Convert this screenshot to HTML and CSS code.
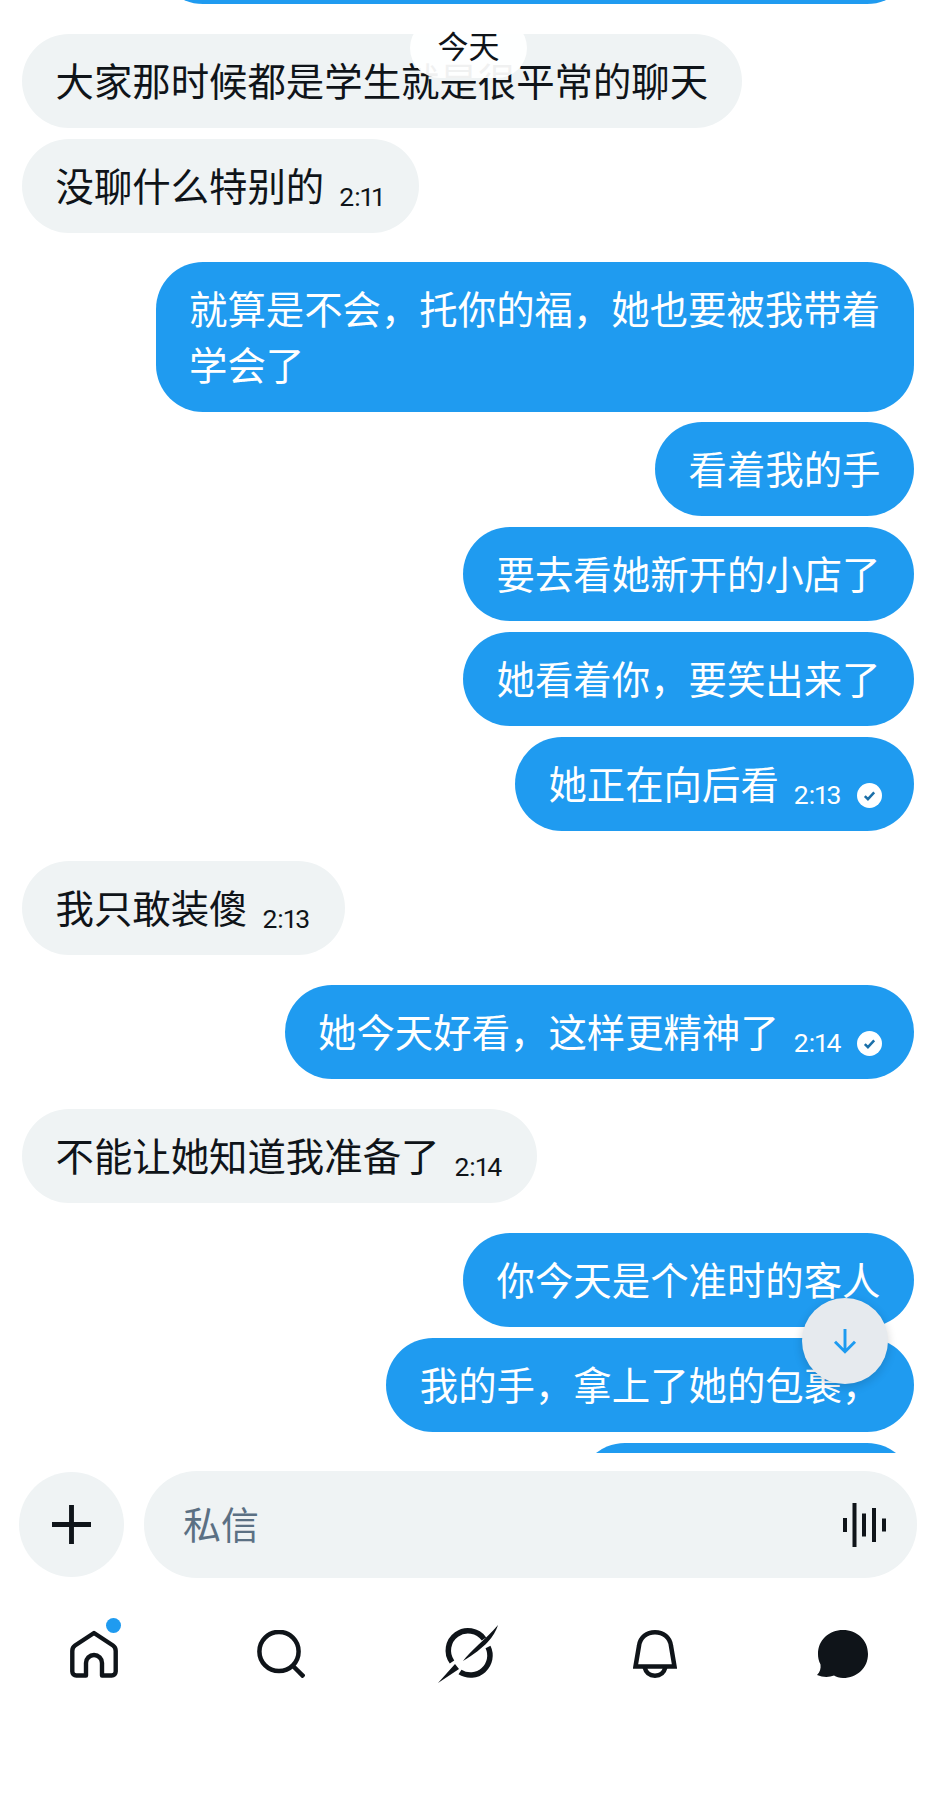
FILE: index.html
```html
<!DOCTYPE html>
<html lang="zh">
<head>
<meta charset="utf-8">
<title>私信</title>
<link rel="stylesheet" href="styles.css">
</head>
<body>
<div class="app">
  <main class="chat">
    <div class="bubble out clipped-top">我们今天已经把这些事情全部都安排好了</div>
    <div class="bubble in group">大家那时候都是学生就是很平常的聊天</div>
    <div class="bubble in stamped">没聊什么特别的<span class="time">2:11</span></div>
    <div class="bubble out group tight">就算是不会，托你的福，她也要被我带着学会了</div>
    <div class="bubble out after-tall">看着我的手</div>
    <div class="bubble out">要去看她新开的小店了</div>
    <div class="bubble out">她看着你，要笑出来了</div>
    <div class="bubble out sent">她正在向后看<span class="time">2:13</span><svg class="check" viewBox="0 0 24 24"><circle cx="12" cy="12" r="12" fill="#fff"/><path d="M7.5 12.5l3 3 6-6.5" fill="none" stroke="#1b6fa8" stroke-width="2.4"/></svg></div>
    <div class="bubble in group stamped">我只敢装傻<span class="time">2:13</span></div>
    <div class="bubble out group sent">她今天好看，这样更精神了<span class="time">2:14</span><svg class="check" viewBox="0 0 24 24"><circle cx="12" cy="12" r="12" fill="#fff"/><path d="M7.5 12.5l3 3 6-6.5" fill="none" stroke="#1b6fa8" stroke-width="2.4"/></svg></div>
    <div class="bubble in group stamped">不能让她知道我准备了<span class="time">2:14</span></div>
    <div class="bubble out group">你今天是个准时的客人</div>
    <div class="bubble out">我的手，拿上了她的包裹，</div>
    <div class="bubble out">我们一起出发吧</div>
    <div class="date-pill">今天</div>
    <button class="scroll-down" aria-label="向下滚动">
      <svg viewBox="0 0 24 24" class="scroll-icon"><path d="M12 3v17M4.5 12.5L12 20l7.5-7.5" fill="none" stroke="#1d9bf0" stroke-width="2.2"/></svg>
    </button>
  </main>

  <section class="composer">
    <button class="plus" aria-label="添加">
      <svg viewBox="0 0 40 40" class="plus-icon"><path d="M20 0v40M0 20h40" stroke="#0f1419" stroke-width="5"/></svg>
    </button>
    <div class="input">
      <span class="placeholder">私信</span>
      <svg viewBox="0 0 44 44" class="voice"><path d="M2 15v14M11.500 0v44M21 10.500v23M31 5v34M41 15.500v13" stroke="#0f1419" stroke-width="4" fill="none"/></svg>
    </div>
  </section>

  <nav class="tabs">
    <div class="tab home">
      <svg viewBox="0 0 48 48" class="ico-home"><path d="M24 3L43 15.500Q45.700 17.300 45.700 21V41.500a4 4 0 0 1-4 4H32V33a8 8 0 0 0-16 0V45.500H6.300a4 4 0 0 1-4-4V21Q2.300 17.300 5 15.500Z" fill="none" stroke="#0f1419" stroke-width="4.400" stroke-linejoin="round"/></svg>
      <span class="dot"></span>
    </div>
    <div class="tab">
      <svg viewBox="0 0 48 48" class="ico-search"><circle cx="22" cy="21.500" r="19.600" fill="none" stroke="#0f1419" stroke-width="4.500"/><path d="M35 35L47 47" stroke="#0f1419" stroke-width="4.500"/></svg>
    </div>
    <div class="tab">
      <svg viewBox="0 0 60 58" class="ico-grok"><path d="M46 14A19.500 19.500 0 0 0 14 37M22 47A19.500 19.500 0 0 0 50 22" fill="none" stroke="#0f1419" stroke-width="5.500"/><path d="M60 0C56 12 48 22 25 36C32 26 48 14 60 0ZM0 58L17 39L21 44Z" fill="#0f1419"/></svg>
    </div>
    <div class="tab">
      <svg viewBox="0 0 44 48" class="ico-bell"><path d="M2.500 36.500L6 16C7 7 14 2.250 22 2.250C30 2.250 37 7 38 16L41.500 36.500Z" fill="none" stroke="#0f1419" stroke-width="4.500"/><path d="M11.500 37C13 43 17 45.700 22 45.700C27 45.700 31 43 32.500 37" fill="none" stroke="#0f1419" stroke-width="4.500"/></svg>
    </div>
    <div class="tab">
      <svg viewBox="0 0 51 48" class="ico-msg"><path d="M26 0C40 0 51 10 51 24S40 48 26 48C22 48 19.500 47 17 45.500C12 47.500 6 47.500 0 45C3 42 4 38.500 3.500 34.500C1.500 31 1 27 1 24C1 10 12 0 26 0Z" fill="#0f1419"/></svg>
    </div>
  </nav>
</div>
</body>
</html>
```

FILE: styles.css
```css
* {
  box-sizing: border-box;
}

html,
body {
  margin: 0;
  padding: 0;
  background: #fff;
}

body {
  font-family: "Noto Sans CJK SC", "Roboto", sans-serif;
  color: #0f1419;
}

.app {
  width: 936px;
  height: 1796px;
  overflow: hidden;
  display: flex;
  flex-direction: column;
}

.chat {
  position: relative;
  height: 1453px;
  overflow: hidden;
  padding: 0 22px;
  display: flex;
  flex-direction: column;
  flex: none;
}

.bubble {
  flex: none;
  max-width: 758.5px;
  margin-top: 11px;
  padding: 17px 33.5px 21px;
  font-size: 38.4px;
  line-height: 56px;
  border-radius: 47px;
}

.bubble.group {
  margin-top: 30px;
}

.bubble.group.tight {
  margin-top: 29px;
}

.bubble.after-tall {
  margin-top: 10px;
}

.bubble.clipped-top {
  margin-top: -90px;
}

.bubble.in {
  align-self: flex-start;
  background: #eff3f4;
  color: #0f1419;
}

.bubble.out {
  align-self: flex-end;
  background: #1f9bf0;
  color: #fff;
}

.bubble.stamped {
  padding-right: 35px;
}

.bubble.sent {
  padding-right: 32.5px;
}

.time {
  display: inline-block;
  margin-left: 15px;
  font-family: "Roboto", sans-serif;
  font-size: 26.5px;
  font-variant-numeric: proportional-nums;
  line-height: 1;
  vertical-align: -5px;
  white-space: nowrap;
}

.check {
  display: inline-block;
  width: 25px;
  height: 25px;
  margin-left: 15px;
  vertical-align: -9px;
}

.date-pill {
  position: absolute;
  top: 18px;
  left: 410px;
  width: 117px;
  height: 60px;
  border-radius: 30px;
  background: rgba(255, 255, 255, 0.94);
  text-align: center;
  font-size: 31px;
  line-height: 54px;
}

.scroll-down {
  position: absolute;
  top: 1298px;
  left: 802px;
  width: 86px;
  height: 86px;
  padding: 0;
  border: 0;
  border-radius: 50%;
  background: #e6eaee;
  box-shadow: 0 3px 10px rgba(15, 20, 25, 0.18);
  display: flex;
  align-items: center;
  justify-content: center;
}

.scroll-icon {
  width: 32px;
  height: 32px;
}

.composer {
  flex: none;
  margin-top: 18px;
  padding: 0 19px 0 19px;
  display: flex;
  align-items: center;
  gap: 20px;
}

.plus {
  flex: none;
  width: 105px;
  height: 105px;
  padding: 0;
  border: 0;
  border-radius: 50%;
  background: #eff3f4;
  display: flex;
  align-items: center;
  justify-content: center;
}

.plus-icon {
  width: 39px;
  height: 39px;
}

.input {
  flex: 1;
  height: 107px;
  padding: 0 30px 0 39px;
  border-radius: 53px;
  background: #eff3f4;
  display: flex;
  align-items: center;
  justify-content: space-between;
}

.placeholder {
  font-size: 38px;
  line-height: 1;
  margin-top: -4px;
  color: #5b7083;
}

.voice {
  width: 44px;
  height: 44px;
}

.tabs {
  flex: none;
  margin-top: 46px;
  display: grid;
  grid-template-columns: repeat(5, 1fr);
  height: 60px;
}

.tab {
  position: relative;
  display: flex;
  align-items: center;
  justify-content: center;
}

.dot {
  position: absolute;
  top: -6px;
  left: 106px;
  width: 15px;
  height: 15px;
  border-radius: 50%;
  background: #1f9bf0;
}

.ico-home {
  width: 48px;
  height: 48px;
}

.ico-search {
  width: 48px;
  height: 48px;
}

.ico-grok {
  width: 60px;
  height: 58px;
}

.ico-bell {
  width: 44px;
  height: 48px;
}

.ico-msg {
  width: 51px;
  height: 48px;
}
```
